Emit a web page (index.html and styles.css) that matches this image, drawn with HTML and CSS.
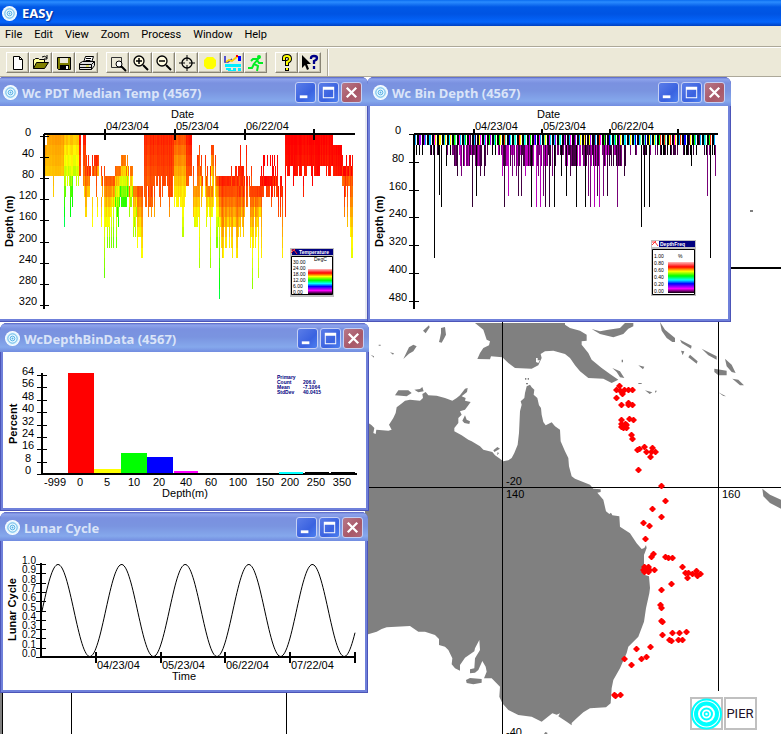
FILE: index.html
```html
<!DOCTYPE html>
<html lang="en">
<head>
<meta charset="utf-8">
<title>EASy</title>
<link rel="stylesheet" href="styles.css">
</head>
<body>
<svg class="defs" aria-hidden="true">
  <symbol id="rings" viewBox="0 0 16 16"><circle cx="8" cy="8" r="8" fill="#fff"/><circle cx="8" cy="8" r="7" fill="#e4f6ff"/><g fill="none" stroke="#58b0e4"><circle cx="8" cy="8" r="5"/><circle cx="8" cy="8" r="2.5"/></g><circle cx="8" cy="8" r="1" fill="#58b0e4"/></symbol>
  <symbol id="min" viewBox="0 0 20 20"><path d="M4 13h8v3H4z" fill="#fff"/></symbol>
  <symbol id="max" viewBox="0 0 20 20"><path d="M4 4h12v12H4zM5 7v8h10V7z" fill="#fff" fill-rule="evenodd"/></symbol>
  <symbol id="close" viewBox="0 0 20 20"><path d="M5 5l10 10M15 5L5 15" stroke="#fff" stroke-width="2.4"/></symbol>
  <linearGradient id="spectrum" x1="0" y1="0" x2="0" y2="1">
    <stop offset="0" stop-color="#fbb"/><stop offset=".16" stop-color="#f00"/><stop offset=".3" stop-color="#ff0"/><stop offset=".45" stop-color="#0f0"/><stop offset=".58" stop-color="#0ff"/><stop offset=".7" stop-color="#00f"/><stop offset=".86" stop-color="#f0f"/><stop offset="1" stop-color="#000"/>
  </linearGradient>
</svg>
<div class="app">
  <header class="app-title"><svg class="ring"><use href="#rings"/></svg><h1>EASy</h1></header>
  <nav class="menu"><a href="#">File</a><a href="#">Edit</a><a href="#">View</a><a href="#">Zoom</a><a href="#">Process</a><a href="#">Window</a><a href="#">Help</a></nav>
  <div class="toolbar">
    <div class="group">
      <button aria-label="New"><svg viewBox="0 0 18 18"><path d="M4.500 2.500h6l3 3v10h-9zM10.500 2.500v3h3" fill="#fff" stroke="#000"/></svg></button>
      <button aria-label="Open"><svg viewBox="0 0 18 18"><path d="M1.500 14.500v-9h1l1-1h3l1 1h5v3" fill="#ff9" stroke="#000"/><path d="M1.500 14.500l3-6h12l-4 6z" fill="#808000" stroke="#000"/><path d="M10 3q3-2 5 1M15 1v4h-3" fill="none" stroke="#000"/></svg></button>
      <button aria-label="Save"><svg viewBox="0 0 18 18"><path d="M2.500 3.500h13v12h-12l-1-1z" fill="#808000" stroke="#000"/><path d="M5 4h8v5H5z" fill="#ece9d8"/><path d="M5 11h9v4H5z"/><path d="M11 12h2v3h-2z" fill="#fff"/></svg></button>
      <button aria-label="Print"><svg viewBox="0 0 18 18"><path d="M5.500 8.500l2-6h8l-2 6" fill="#fff" stroke="#000"/><path d="M8 4.500h5M7.500 6.500h5" stroke="#000"/><path d="M1.500 9.500l3-2h12v4l-3 4h-12z" fill="#ddd" stroke="#000"/><path d="M1.500 10.500h12l3-3M2 13.500h11M13.500 10.500v5" fill="none" stroke="#000"/><path d="M8 12h3" stroke="#dd0"/></svg></button>
    </div>
    <div class="group">
      <button aria-label="Zoom window"><svg viewBox="0 0 18 18"><path d="M2.500 3.500h10v10h-10z" fill="none" stroke="#333"/><circle cx="10" cy="10" r="3" fill="#fff" stroke="#000"/><path d="M12 12l5 5" stroke="#000" stroke-width="2"/></svg></button>
      <button aria-label="Zoom in"><svg viewBox="0 0 18 18"><circle cx="7" cy="7" r="5" fill="#fffbe0" stroke="#000" stroke-width="1.300"/><path d="M4 7h6M7 4v6" stroke="#000" stroke-width="1.500"/><path d="M11 11l5 5" stroke="#000" stroke-width="2"/></svg></button>
      <button aria-label="Zoom out"><svg viewBox="0 0 18 18"><circle cx="7" cy="7" r="5" fill="#fffbe0" stroke="#000" stroke-width="1.300"/><path d="M4 7h6" stroke="#000" stroke-width="1.500"/><path d="M11 11l5 5" stroke="#000" stroke-width="2"/></svg></button>
      <button aria-label="Centre"><svg viewBox="0 0 18 18"><circle cx="9" cy="9" r="5" fill="none" stroke="#000" stroke-width="1.300"/><path d="M1 9h6M11 9h6M9 1v6M9 11v6" stroke="#000"/></svg></button>
      <button aria-label="Sun"><svg viewBox="0 0 18 18"><path d="M6 3h6l3 3v6l-3 3H6l-3-3V6z" fill="#ff0"/></svg></button>
      <button aria-label="Ocean"><svg viewBox="0 0 18 18"><path d="M1 2v6h3l4-3" fill="none" stroke="#22c" stroke-width="1.500"/><path d="M2 8l3-2 3 1 6-5" fill="none" stroke="#fc0" stroke-width="2"/><path d="M14 2h3v5h-3z" fill="#00f"/><path d="M12 2h2" stroke="#f00" stroke-width="2"/><path d="M1 10h16v3H1zM2 14h5v2H2zM9 14h3v2H9zM14 14h3v3h-3zM4 16h8v1H4z" fill="#0ef"/></svg></button>
      <button aria-label="Run"><svg viewBox="0 0 18 18"><circle cx="12" cy="3" r="2" fill="#0e2"/><path d="M4 7l2-2h5l-4 5 4 2-1 5M10 6l2 3h4M7 10l-2 4H1" fill="none" stroke="#0e2" stroke-width="2"/></svg></button>
    </div>
    <div class="group">
      <button aria-label="About"><svg viewBox="0 0 18 18"><path d="M6 7V4q0-2 3-2t3 3q0 2-3 3v4M9 14v3" fill="none" stroke="#000" stroke-width="4"/><path d="M6 6V4q0-2 3-2t3 3q0 2-3 3v3M9 14v2" fill="none" stroke="#ff0" stroke-width="2"/></svg></button>
      <button aria-label="Context help"><svg viewBox="0 0 18 18"><path d="M1 1v13l3-3 2 5 2-1-2-5h4z"/><path d="M10 5V4q0-2 3-2t3 2q0 2-3 3v3M13 12v3" fill="none" stroke="#008" stroke-width="2.300"/></svg></button>
    </div>
    <span class="sep"></span>
  </div>

  <main class="desktop">
    <svg class="map" viewBox="0 77 781 657" preserveAspectRatio="xMinYMin slice" role="img" aria-label="Track map of eastern Australia">
      <rect x="0" y="77" width="781" height="657" fill="#fff"/>
      <g transform="translate(365 318) scale(.33333)" fill="#808080">
        <path d="M0 310L15 318 20 322 28 330 25 345 32 348 34 335 70 338 80 335 72 320 85 300 92 285 95 268 108 258 120 248 135 245 165 248 174 240 172 228 182 222 190 232 215 233 240 240 262 248 275 240 285 232 300 212 308 210 306 222 290 235 302 240 300 248 317 252 310 262 300 275 285 280 290 290 280 300 280 315 268 330 268 340 290 352 310 365 320 370 345 385 355 395 382 402 390 412 405 422 415 430 430 427 440 420 448 405 458 380 462 345 465 280 470 260 467 250 478 240 480 225 485 205 495 200 500 208 508 215 506 230 517 240 522 262 528 270 530 290 535 312 542 322 560 313 570 325 585 335 587 370 600 400 610 420 612 445 620 475 630 482 675 500 685 512 707 514 707 522 697 524 715 545 723 580 733 588 738 584 742 592 763 595 765 626 795 646 815 676 830 693 838 690 843 681 845 690 837 711 837 745 840 771 852 775 855 810 853 826 843 871 837 911 820 956 790 986 785 1005 765 1051 745 1086 740 1111 737 1156 723 1168 675 1171 655 1183 635 1201 620 1215 620 1222 605 1211 580 1195 585 1186 575 1190 562 1186 530 1211 500 1196 460 1191 430 1176 412 1156 403 1136 405 1106 380 1081 357 1081 365 1061 362 1046 352 1029 340 1056 330 1064 315 1066 315 1054 328 1051 330 1021 345 996 343 966 330 991 328 1000 300 1019 285 1041 285 1058 270 1051 260 1039 262 1021 250 996 240 986 222 981 222 963 210 951 180 941 160 941 135 924 65 928 50 933 35 941 12 948 0 951z"/>
        <path d="M330 15L355 35 365 65 375 70 372 82 355 90 345 105 337 123 375 124 378 115 412 118 430 135 450 150 500 152 520 142 530 120 527 108 540 100 565 98 600 108 615 120 630 142 645 160 670 180 715 182 740 195 760 185 735 168 710 150 680 125 670 105 650 80 650 70 665 68 665 50 645 38 615 30 600 20 600 15z"/>
        <path d="M680 33L705 40 730 35 765 30 780 15 805 15 805 25 790 32 775 48 745 58 705 48zM885 12L900 35 930 60 930 72 922 72 905 60 890 38zM945 65L980 83 978 92 950 75zM1010 92L1055 115 1055 125 1030 112zM1080 122L1100 140 1112 165 1100 162 1085 145zM1048 152L1085 158 1085 172 1060 172 1048 162zM1102 182L1120 185 1137 202 1125 202zM1060 223L1083 235 1075 234zM975 110L998 130 995 137 970 118zM948 98l10 2-5 12zM820 142l18 4-4 8zM742 150L765 160 778 180 765 178 755 162zM840 217l22 6-8 5zM870 218l6 0-5 7zM770 125l4 0v8h-4zM820 195h10v3h-10zM1192 512L1215 530 1248 545 1248 572 1215 555 1195 535zM228 30L240 27 243 50 238 60 230 74 222 72 225 60 228 45zM174 38L192 22 194 28 182 46zM115 123L132 88 145 80 155 85 145 100 132 107zM90 232L100 217 130 217 140 225 125 235zM148 215L165 213 172 207 176 220 160 223zM292 308L300 292 305 305 315 310 313 318 298 315zM385 397L397 387 405 392 388 402zM398 402l4 4-6 6zM303 1086L315 1080 350 1083 350 1094 325 1099 305 1095zM537 1248l4-6 6 2v6zM41 80h6v3h-6zM75 103l12 3-3 4zM17 110l10 5v4zM480 180h4v5h-4zM488 180h4v5h-4zM483 195h6v4h-6z"/>
        <path d="M513 120l5 0v7h7l-5 8-7-3z" fill="#fff"/>
      </g>
      <path d="M71.500 690v44M286.500 690v44M502.500 320v414M718.500 320v371M369 487.500h412M731 267.500h50" stroke="#000" shape-rendering="crispEdges"/>
      <path d="M731 268h50" stroke="#000" stroke-width="2"/>
      <path d="M750 211h3" stroke="#808080" stroke-width="2"/>
      <rect x="0" y="690" width="2" height="44" fill="#808080"/><rect x="2" y="690" width="1" height="44"/>
      <g class="label"><text x="506" y="485">-20</text><text x="506" y="498">140</text><text x="722" y="498">160</text><text x="506" y="736">-40</text></g>
      <g id="track" fill="#f00"></g>
      <g class="logo">
        <rect x="691" y="698" width="31" height="31" fill="#fff" stroke="#c0c0c0" stroke-width="2"/>
        <g fill="none" stroke="#0ff"><circle cx="706.500" cy="714" r="14.500" stroke-width="2"/><circle cx="706.500" cy="714" r="10.500" stroke-width="4"/><circle cx="706.500" cy="714" r="5.500" stroke-width="2"/><circle cx="706.500" cy="714" r="2" stroke-width="1.500"/></g>
        <rect x="725" y="698" width="31" height="31" fill="#fff" stroke="#c0c0c0" stroke-width="2"/>
        <text x="740" y="718" class="pier">PIER</text>
      </g>
    </svg>

    <section class="window w-temp">
      <header><svg class="ring"><use href="#rings"/></svg><h2>Wc PDT Median Temp (4567)</h2><button aria-label="Minimize"><svg><use href="#min"/></svg></button><button aria-label="Maximize"><svg><use href="#max"/></svg></button><button class="close" aria-label="Close"><svg><use href="#close"/></svg></button></header>
      <svg class="body" viewBox="0 106 365 213" role="img" aria-label="Temperature by depth and date">
        <g id="temp" shape-rendering="crispEdges"></g>
        <path d="M44 134h311M44 134v175" stroke="#000" stroke-width="2" fill="none"/>
        <path d="M105 129v11M175 129v11M245 129v11M314 129v11" stroke="#000" stroke-width="2"/>
        <g id="temp-axis"></g>
        <g class="label"><text x="171" y="118">Date</text><text x="106" y="130">04/23/04</text><text x="176" y="130">05/23/04</text><text x="246" y="130">06/22/04</text></g>
        <text class="axis" transform="translate(13 247) rotate(-90)">Depth (m)</text>
        <g class="legend" transform="translate(290 248)"><path d="M0 0h44v49H0z" fill="#c0c0c0"/><path d="M2 1h41v6H2z" fill="#000080"/><path d="M1 2l3 0 3 4M1 5l4-4" stroke="#f33" fill="none"/><path d="M1.500 8.500h41v38h-41z" fill="#fff" stroke="#000"/><path d="M18 21h24v25H18z" fill="url(#spectrum)"/><text x="9" y="6" class="cap">Temperature</text><text x="24" y="13">DegC</text><text x="3" y="16">30.00</text><text x="3" y="22">24.00</text><text x="3" y="28">18.00</text><text x="3" y="34">12.00</text><text x="3" y="40">6.00</text><text x="3" y="46">0.00</text></g>
      </svg>
    </section>

    <section class="window w-bins">
      <header><svg class="ring"><use href="#rings"/></svg><h2>Wc Bin Depth (4567)</h2><button aria-label="Minimize"><svg><use href="#min"/></svg></button><button aria-label="Maximize"><svg><use href="#max"/></svg></button><button class="close" aria-label="Close"><svg><use href="#close"/></svg></button></header>
      <svg class="body" viewBox="370 106 358 213" role="img" aria-label="Depth bins by date">
        <g id="bins" shape-rendering="crispEdges"></g>
        <path d="M414 134h304M414 134v175" stroke="#000" stroke-width="2" fill="none"/>
        <path d="M474 129v6M542 129v6M610 129v6M678 129v6" stroke="#000" stroke-width="2"/>
        <g id="bins-axis"></g>
        <g class="label"><text x="537" y="118">Date</text><text x="475" y="130">04/23/04</text><text x="543" y="130">05/23/04</text><text x="611" y="130">06/22/04</text></g>
        <text class="axis" transform="translate(383 247) rotate(-90)">Depth (m)</text>
        <g class="legend" transform="translate(651 240)"><path d="M0 0h45v56H0z" fill="#c0c0c0"/><path d="M2 1h42v6H2z" fill="#000080"/><path d="M1 1h7v6H1z" fill="#fff"/><path d="M1 2l3 0 3 4M1 5l4-4" stroke="#f33" fill="none"/><path d="M1.500 9.500h42v45h-42z" fill="#fff" stroke="#000"/><path d="M17 22h26v31H17z" fill="url(#spectrum)"/><text x="9" y="6" class="cap">DepthFreq</text><text x="27" y="18">%</text><text x="3" y="18">1.00</text><text x="3" y="25">0.80</text><text x="3" y="32">0.60</text><text x="3" y="39">0.40</text><text x="3" y="46">0.20</text><text x="3" y="53">0.00</text></g>
      </svg>
    </section>

    <section class="window w-hist">
      <header><svg class="ring"><use href="#rings"/></svg><h2>WcDepthBinData (4567)</h2><button aria-label="Minimize"><svg><use href="#min"/></svg></button><button aria-label="Maximize"><svg><use href="#max"/></svg></button><button class="close" aria-label="Close"><svg><use href="#close"/></svg></button></header>
      <svg class="body" viewBox="3 352 363 156" role="img" aria-label="Percent by depth">
        <path d="M68 373h26v100H68z" fill="#f00"/><path d="M94 469h27v4H94z" fill="#ff0"/><path d="M121 453h26v20h-26z" fill="#0f0"/><path d="M147 457h26v16h-26z" fill="#00f"/><path d="M174 471h24v2h-24z" fill="#f0f"/><path d="M42 373v101M41 474h316" stroke="#000" stroke-width="2"/><path d="M279 472h24v2h-24z" fill="#0ff"/><path d="M305 472h24v2h-24zM331 472h24v2h-24z"/>
        <g id="hist-axis"></g>
        <g class="label mid"><text x="55" y="486">-999</text><text x="80" y="486">0</text><text x="107" y="486">5</text><text x="134" y="486">10</text><text x="159" y="486">20</text><text x="186" y="486">40</text><text x="211" y="486">60</text><text x="238" y="486">100</text><text x="265" y="486">150</text><text x="290" y="486">200</text><text x="316" y="486">250</text><text x="342" y="486">350</text><text x="185" y="497">Depth(m)</text></g>
        <text class="axis" transform="translate(17 444) rotate(-90)">Percent</text>
        <g class="stats"><text x="277" y="379">Primary</text><text x="277" y="384">Count</text><text x="303" y="384">206.0</text><text x="277" y="389">Mean</text><text x="303" y="389">-7.1064</text><text x="277" y="394">StdDev</text><text x="303" y="394">40.0415</text></g>
      </svg>
    </section>

    <section class="window w-lunar">
      <header><svg class="ring"><use href="#rings"/></svg><h2>Lunar Cycle</h2><button aria-label="Minimize"><svg><use href="#min"/></svg></button><button aria-label="Maximize"><svg><use href="#max"/></svg></button><button class="close" aria-label="Close"><svg><use href="#close"/></svg></button></header>
      <svg class="body" viewBox="3 541 362 149" role="img" aria-label="Lunar cycle over time">
        <path id="wave" fill="none" stroke="#000"/>
        <path d="M41 563v94M40 657h315M96 652v11M161 652v11M225 652v11M290 652v11M355 652v11" stroke="#000" stroke-width="2"/>
        <g id="lunar-axis" class="tight"></g>
        <g class="label"><text x="97" y="669">04/23/04</text><text x="162" y="669">05/23/04</text><text x="226" y="669">06/22/04</text><text x="291" y="669">07/22/04</text><text x="172" y="680">Time</text></g>
        <text class="axis" transform="translate(16 641) rotate(-90)">Lunar Cycle</text>
      </svg>
    </section>
  </main>
</div>
<script src="charts.js"></script>
</body>
</html>
```
FILE: styles.css
```css
* { box-sizing: border-box; }
body { margin: 0; font-family: "Noto Sans", "Liberation Sans", sans-serif; font-size: 11px; color: #000; background: #ece9d8; }
h1, h2 { margin: 0; flex: 1; white-space: nowrap; }
button { padding: 0; border: 0; font: inherit; }
.defs { position: absolute; width: 0; height: 0; }
.app { display: flex; flex-direction: column; min-height: 100vh; }
.app-title { display: flex; align-items: center; gap: 5px; height: 26px; padding: 0 2px; color: #fff; background: linear-gradient(#0a6cf0 0, #2a8cff 2px, #0058e6 7px, #0054e3 14px, #0565fb 22px, #0040c0 26px); }
.app-title h1 { font-size: 13px; line-height: 18px; text-shadow: 1px 1px 1px #0a2a90; }
.ring { width: 15px; height: 15px; flex: none; }
.menu { display: flex; gap: 12px; height: 20px; padding: 0 5px; font-family: Roboto, sans-serif; line-height: 18px; }
.menu a { color: #000; text-decoration: none; }
.toolbar { display: flex; gap: 8px; align-items: center; height: 31px; padding: 2px 6px 0; border-top: 1px solid #aca899; border-bottom: 1px solid #aca899; box-shadow: inset 0 1px #fff; }
.group { display: flex; }
.group button { width: 23px; height: 21px; background: #ece9d8; border: 1px solid; border-color: #fff #888474 #888474 #fff; box-shadow: inset -1px -1px #c5c1b0; display: grid; place-items: center; }
.group svg { width: 18px; height: 18px; }
.sep { width: 2px; height: 27px; margin-left: -2px; border-left: 1px solid #aca899; border-right: 1px solid #fff; }
.desktop { position: relative; flex: 1; overflow: hidden; min-height: 620px; background: #fff; }
.map { position: absolute; inset: 0; width: 100%; height: 100%; }
.window { position: absolute; padding-bottom: 3px; background: #6f80da; border-radius: 7px 7px 0 0; box-shadow: inset 0 0 0 1px #4c55b8; }
.window header { display: flex; align-items: center; gap: 2px; height: 29px; padding: 2px 5px 0; border-radius: 7px 7px 0 0; color: #dae4f8; background: linear-gradient(#5561c2 0, #8ea4ec 2px, #7a91e0 6px, #7a94e0 14px, #85a8ec 24px, #728ce0 29px); }
.window h2 { font-size: 13px; line-height: 18px; padding-left: 2px; }
.window header button { width: 21px; height: 21px; border: 1px solid #c5d0f5; border-radius: 3px; background: linear-gradient(135deg, #5b7de8, #3a62e0 60%, #4c80f0); }
.window header .close { background: linear-gradient(135deg, #b87888, #a85868 60%, #b06878); }
.window header button svg { display: block; width: 19px; height: 19px; }
.body { display: block; width: calc(100% - 6px); margin: 0 3px; background: #fff; }
.w-temp { left: -3px; top: 0; width: 371px; }
.w-temp header { padding: 2px 6px 0; }
.w-temp .body { box-shadow: 3px 0 #e6e8f0; }
.w-bins { left: 367px; top: 0; width: 364px; }
.w-bins header { padding: 2px 6px 0; }
.w-hist { left: 0; top: 246px; width: 369px; }
.w-lunar { left: 0; top: 435px; width: 368px; }
.label { font: 11px "Liberation Sans", sans-serif; }
.tight .label { font-size: 10px; line-height: 10px; }
.mid { text-anchor: middle; }
.axis { font: bold 11px "Liberation Sans", sans-serif; }
.legend { font: 5px "Liberation Sans", sans-serif; }
.cap { fill: #fff; font-weight: bold; }
.stats { font: bold 5px "Liberation Sans", sans-serif; fill: #000080; }
.pier { font: 13px Roboto, sans-serif; fill: #201028; text-anchor: middle; }
```
FILE: charts.js
```js
const NS = "http://www.w3.org/2000/svg";
const $ = id => document.getElementById(id);
let seed = 7;
const rnd = () => (seed = (seed * 16807) % 2147483647) / 2147483647;
const pick = (a, b) => a + Math.floor(rnd() * (b - a + 1));

function add(parent, tag, attrs, text) {
  const el = document.createElementNS(NS, tag);
  for (const k in attrs) el.setAttribute(k, attrs[k]);
  if (text !== undefined) el.textContent = text;
  parent.append(el);
}
function axis(id, labels, y0, step, tickX, tickW, textX) {
  const g = $(id);
  labels.forEach((t, i) => {
    const y = Math.round(y0 + i * step);
    add(g, "rect", { x: tickX, y, width: tickW, height: 1 });
    add(g, "text", { x: textX, y, class: "label mid" }, t);
  });
}
axis("temp-axis", [0, 40, 80, 120, 160, 200, 240, 280, 320], 136, 21.1, 40, 9, 28);
axis("bins-axis", [0, 80, 160, 240, 320, 400, 480], 134, 27.8, 409, 10, 398);
axis("hist-axis", [64, 56, 48, 40, 32, 24, 16, 8, 0], 375, 12.4, 37, 10, 28);
axis("lunar-axis", ["1.0", "0.9", "0.8", "0.7", "0.6", "0.5", "0.4", "0.3", "0.2", "0.1", "0.0"], 564, 9.3, 36, 10, 29);

/* Depth row edges in chart units */
const ROW = [135, 145, 155, 166, 176, 186, 197, 207, 217, 227, 237, 248, 258, 268, 278, 289, 299];
function column(x, w, top, bottom, h0, h1) {
  for (let r = top; r < bottom; r++) {
    const hue = h0 + (h1 - h0) * (bottom - top < 2 ? 0 : (r - top) / (bottom - top - 1));
    add($("temp"), "rect", { x, y: ROW[r], width: w, height: ROW[r + 1] - ROW[r], fill: `hsl(${Math.round(hue)} 100% 50%)` });
  }
}
/* x0, x1, top row range, bottom row range, hue at top, hue at bottom, coverage */
[
  [45, 47, 1, 1, 4, 4, 38, 46, 1], [47, 64, 0, 0, 4, 4, 38, 46, 1], [64, 79, 0, 0, 4, 5, 46, 72, 1],
  [64, 74, 4, 4, 5, 6, 75, 100, .6], [79, 81, 0, 0, 4, 4, 5, 20, 1], [83, 86, 0, 0, 4, 5, 8, 30, 1],
  [84, 90, 2, 3, 6, 8, 12, 50, 1], [90, 97, 2, 3, 4, 6, 10, 25, .95], [97, 105, 2, 4, 4, 7, 14, 40, .65],
  [104, 115, 4, 4, 7, 9, 22, 62, 1], [115, 119, 3, 3, 7, 10, 25, 110, 1], [119, 128, 2, 3, 6, 7, 28, 110, 1],
  [128, 133, 3, 5, 6, 8, 28, 85, 1], [133, 137, 5, 5, 8, 10, 28, 80, 1], [137, 143, 5, 5, 10, 12, 20, 62, 1],
  [144, 154, 0, 0, 5, 7, 9, 22, 1], [154, 174, 0, 0, 4, 6, 10, 18, 1], [174, 186, 0, 0, 6, 7, 20, 58, 1],
  [186, 192, 0, 0, 4, 5, 6, 20, 1], [192, 202, 1, 3, 5, 8, 15, 45, .65], [202, 217, 1, 4, 4, 8, 15, 55, .6],
  [194, 200, 5, 5, 8, 9, 35, 65, .8], [205, 213, 5, 5, 7, 9, 30, 65, .6],
  [216, 219, 4, 4, 8, 10, 20, 80, 1], [219, 238, 4, 4, 9, 12, 8, 52, 1], [230, 245, 3, 3, 5, 7, 8, 20, .6],
  [238, 245, 4, 5, 8, 10, 10, 48, .9], [245, 252, 3, 5, 6, 7, 10, 25, .85], [250, 262, 5, 5, 8, 11, 14, 56, .95],
  [260, 283, 3, 4, 5, 6, 1, 14, .97], [263, 279, 2, 3, 3, 3, 0, 2, .6],
  [285, 333, 0, 0, 3, 4, 0, 4, 1], [333, 342, 1, 1, 4, 4, 0, 4, 1], [342, 353, 2, 3, 5, 6, 2, 25, .75], [350, 353, 5, 5, 10, 12, 24, 62, 1]
].forEach(([x0, x1, ta, tb, ba, bb, h0, h1, cover]) => {
  for (let x = x0; x < x1; x++) {
    const keep = rnd() < cover, t = pick(ta, tb), b = pick(ba, bb), j = pick(-3, 3);
    if (keep) column(x, 1, t, b, Math.max(0, h0 + j), Math.max(0, h1 + j));
  }
});
/* Single deep casts: x, top, bottom, hues */
[
  [53, 4, 6, 44, 48], [64, 4, 9, 80, 140], [70, 4, 8, 90, 125], [72, 4, 7, 100, 115], [92, 6, 9, 50, 60], [97, 6, 8, 48, 60],
  [101, 6, 9, 40, 60], [104, 8, 14, 60, 95], [107, 8, 11, 62, 90], [109, 8, 11, 62, 90], [111, 7, 11, 62, 90], [113, 7, 11, 70, 95], [116, 8, 11, 70, 95], [148, 5, 8, 10, 30], [151, 5, 8, 12, 35],
  [154, 5, 8, 16, 40], [160, 5, 7, 15, 25], [169, 5, 8, 15, 35], [182, 6, 10, 55, 75], [183, 6, 10, 55, 75], [199, 6, 13, 45, 80],
  [210, 5, 13, 40, 85], [216, 5, 11, 40, 90], [217, 5, 11, 40, 90], [219, 8, 16, 60, 135], [223, 8, 12, 30, 60], [232, 8, 12, 35, 55],
  [240, 1, 5, 6, 12], [246, 1, 4, 6, 14], [252, 8, 15, 40, 85], [258, 8, 14, 45, 75], [261, 7, 12, 35, 55], [271, 5, 7, 2, 20],
  [278, 5, 8, 4, 18], [280, 5, 8, 4, 18], [282, 5, 12, 10, 55], [285, 3, 8, 2, 12], [293, 3, 5, 0, 0], [303, 4, 6, 0, 8],
  [312, 3, 5, 0, 0], [317, 3, 4, 0, 0], [344, 5, 8, 5, 30], [347, 5, 9, 15, 45]
].forEach(([x, t, b, h0, h1]) => column(x, 1, t, b, h0, h1));

/* Depth frequency stripes */
const bins = $("bins");
const bar = (x, y, w, bottom, fill) => add(bins, "rect", { x, y, width: w, height: bottom - y, fill });
const bright = ["#0ff", "#f0f", "#0f0", "#ff0", "#00f", "#0cf", "#f30", "#a0f", "#4fa", "#0af", "#404"];
for (let x = 415; x < 714; x += 5) {
  bar(x, 135, 1, 145, bright[pick(0, 10)]);
  bar(x + 2, 135, 2, 145, "#000");
  bar(x + 4, 135, 1, 145, bright[pick(0, 10)]);
}
const dark = ["#000", "#000", "#303", "#404", "#707", "#b0b"];
const dense = x => (x > 452 && x < 486) || (x > 497 && x < 556) || (x > 560 && x < 626);
for (let x = 416; x < 716; x++) {
  const d = dense(x);
  if (rnd() < (d ? .86 : .4)) {
    const c = dark[d ? pick(2, 5) : pick(0, 4)];
    bar(x, 145, 1, d ? [155, 166, 166, 166][pick(0, 3)] : 155, c);
  }
}
[
  [434, 258, 0], [439, 195, 0], [441, 207, 0], [446, 166, 0], [457, 176, 2], [472, 207, 2], [476, 196, 0], [484, 176, 2], [504, 207, 2], [508, 196, 5],
  [518, 196, 3], [521, 196, 3], [531, 207, 0], [536, 207, 5], [540, 207, 5], [545, 207, 2], [549, 207, 2], [554, 207, 0], [561, 176, 0],
  [566, 196, 0], [576, 207, 0], [585, 207, 0], [590, 207, 4], [594, 207, 5], [599, 207, 5], [603, 196, 4], [607, 196, 2], [617, 207, 4],
  [461, 176, 4], [480, 176, 3], [502, 176, 5], [512, 176, 4], [516, 176, 4], [525, 176, 5], [538, 176, 4], [543, 196, 4], [552, 176, 4], [588, 196, 4], [597, 196, 3], [570, 176, 3],
  [624, 176, 2], [641, 227, 0], [644, 207, 0], [649, 207, 0], [691, 166, 0], [707, 196, 4], [710, 258, 0], [715, 176, 4]
].forEach(([x, b, c]) => bar(x, 145, 1, b, dark[c]));

/* Lunar illumination */
let d = "";
for (let x = 42; x <= 355; x++) {
  const y = 656.5 - 92 * (.5 + .5 * Math.cos(2 * Math.PI * (x - 58) / 63.6));
  d += (d ? "L" : "M") + x + " " + y.toFixed(1);
}
$("wave").setAttribute("d", d);

/* Tag positions */
[
  [620, 386], [617, 390], [621, 391], [625, 390], [629, 390], [633, 390], [623, 394], [617, 398], [622, 405], [629, 403], [633, 405], [629, 405],
  [622, 420], [630, 419], [634, 420], [622, 424], [626, 424], [624, 428], [627, 428], [622, 427], [627, 425], [632, 435], [633, 439], [638, 450], [640, 449],
  [645, 447], [647, 452], [653, 448], [652, 452], [656, 452], [651, 457], [639, 470], [662, 486], [666, 501], [653, 509], [662, 517], [644, 523],
  [650, 526], [646, 539], [654, 554], [652, 557], [666, 557], [669, 558], [673, 558], [645, 567], [649, 567], [645, 572], [649, 572], [647, 570], [644, 570], [650, 570],
  [655, 570], [683, 567], [686, 573], [688, 578], [689, 573], [693, 574], [697, 571], [698, 576], [697, 574], [701, 574], [672, 584], [662, 590], [661, 605],
  [662, 608], [662, 621], [663, 622], [663, 635], [673, 633], [680, 633], [687, 632], [670, 640], [672, 641], [679, 640], [683, 640], [651, 647],
  [637, 649], [647, 657], [642, 659], [625, 659], [632, 665], [615, 695], [616, 696], [621, 695]
].forEach(([x, y]) => add($("track"), "path", { d: `M${x - 1} ${y - 3}h1l3 3-3 3h-1l-3-3z` }));
```
